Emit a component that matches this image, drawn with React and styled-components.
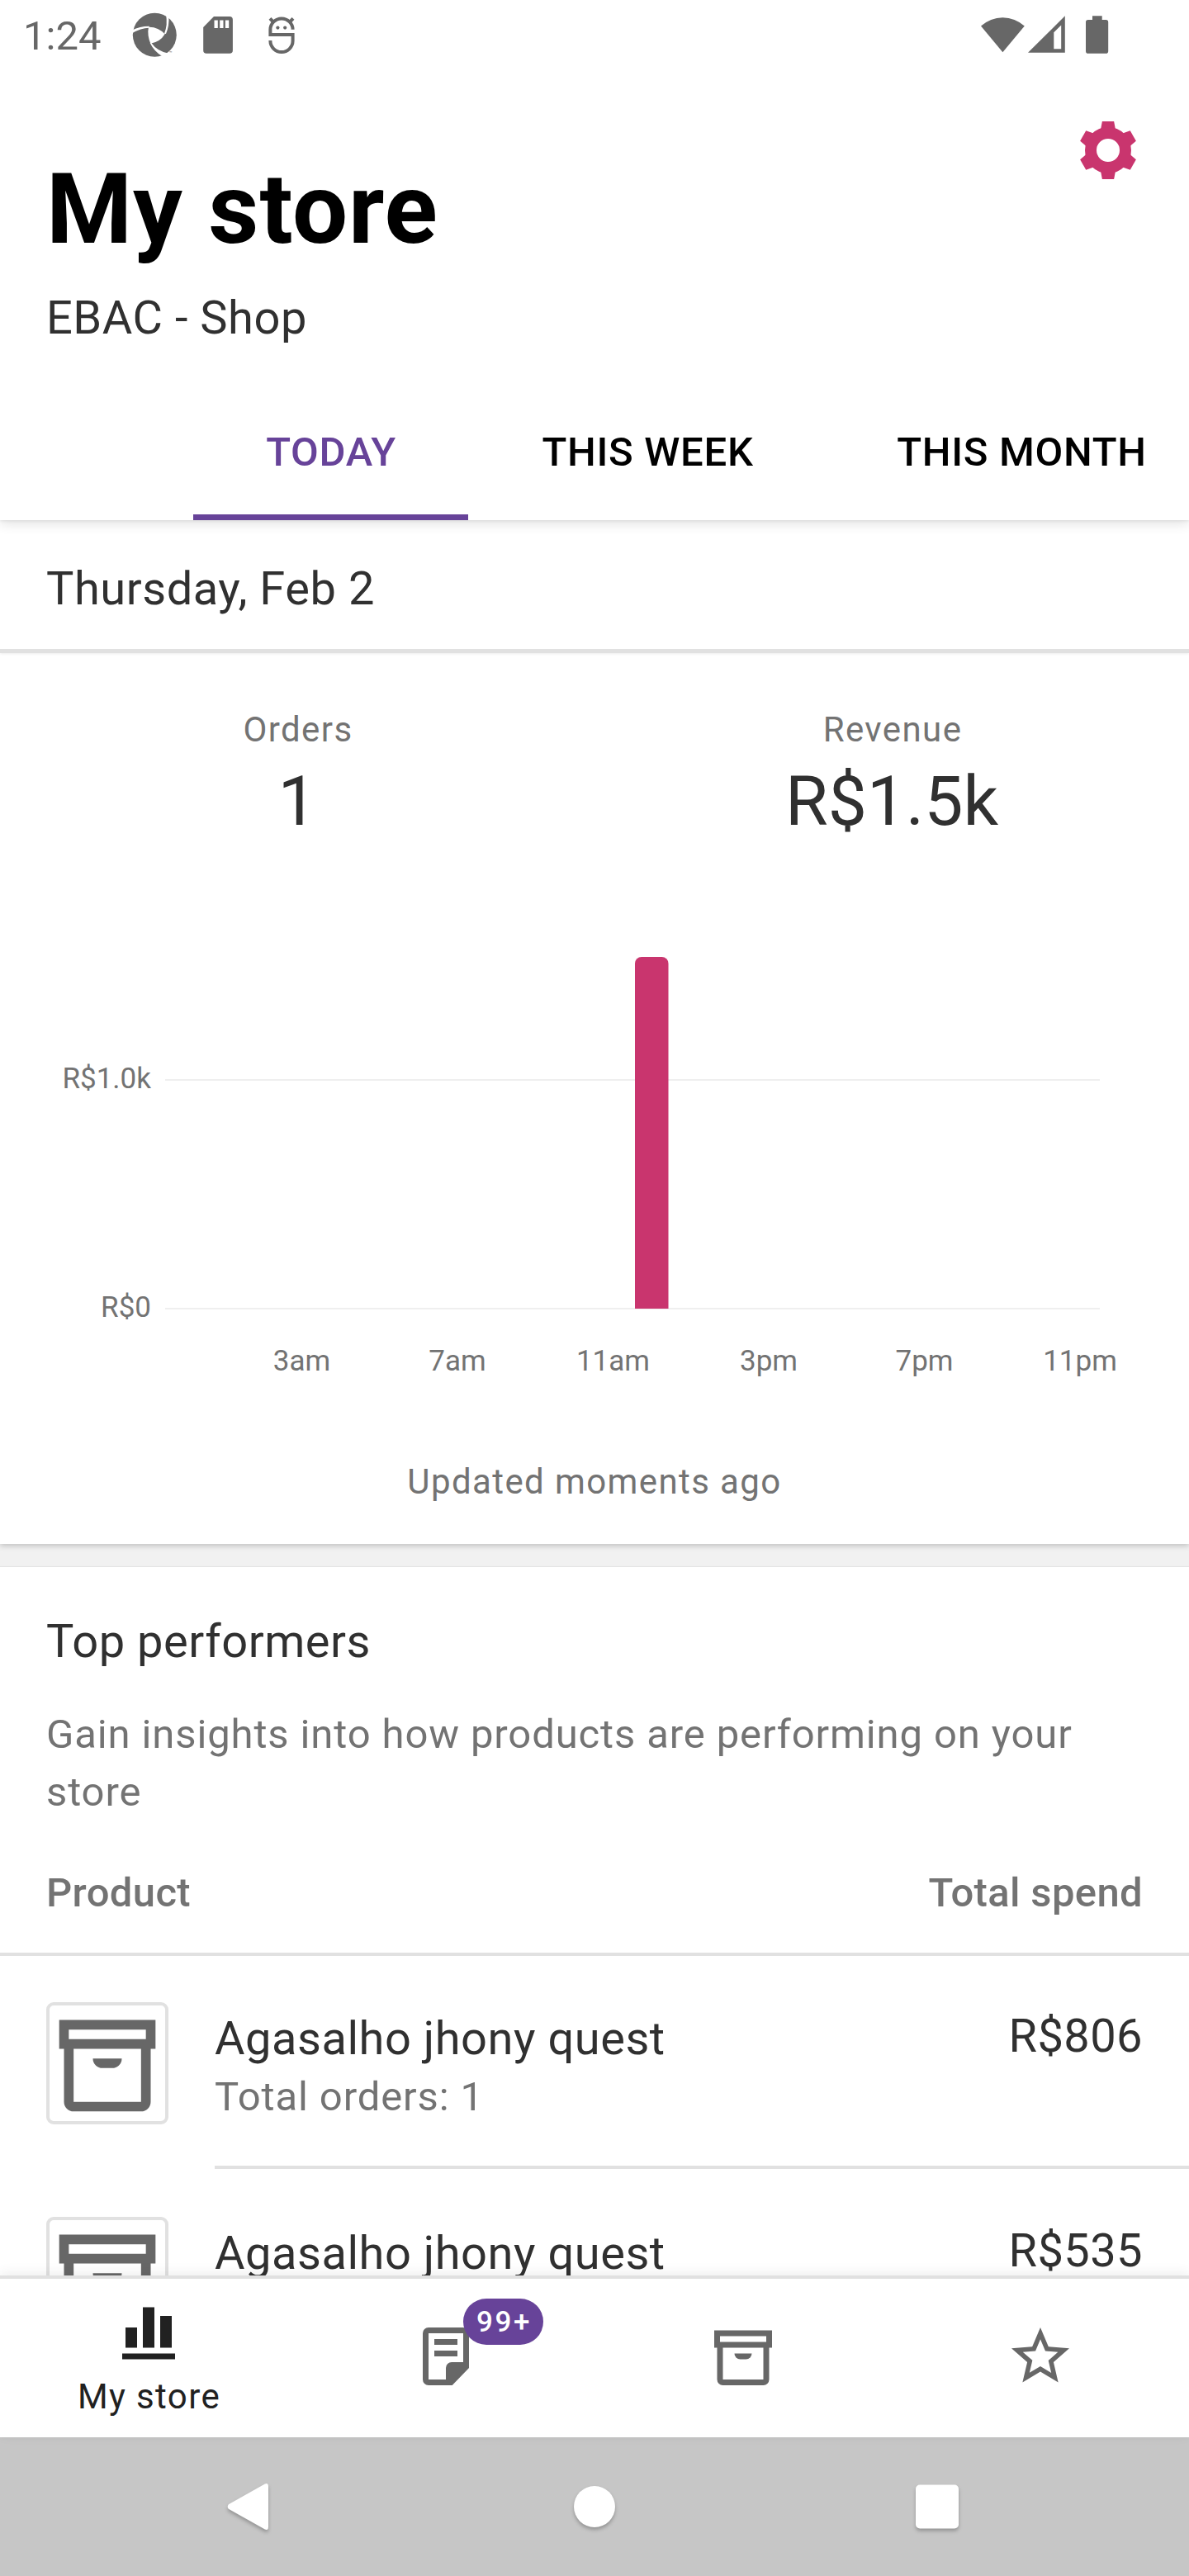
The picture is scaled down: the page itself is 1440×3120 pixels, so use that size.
import React from "react";
import styled, { createGlobalStyle, css } from "styled-components";

const color = {
  ink: "#303030",
  muted: "#737373",
  icon: "#676767",
  line: "#e1e1e1",
  purple: "#674399",
  pink: "#c9356e",
};

const GlobalStyle = createGlobalStyle`
  *, *::before, *::after { box-sizing: border-box; }
  body { margin: 0; background: #fff; }
`;

const Screen = styled.div`
  width: 1440px;
  height: 3120px;
  display: flex;
  flex-direction: column;
  overflow: hidden;
  background: #fff;
  color: ${color.ink};
  font-family: Roboto, "Liberation Sans", sans-serif;
  svg { display: block; flex: none; }
`;

const AppBar = styled.header`
  position: relative;
  z-index: 2;
  height: 630px;
  flex: none;
  display: flex;
  flex-direction: column;
  background: #fff;
  box-shadow: 0 4px 14px rgba(0, 0, 0, 0.12), 0 1px 3px rgba(0, 0, 0, 0.08);
`;

const StatusBar = styled.div`
  height: 84px;
  flex: none;
  display: flex;
  padding: 0 92px 0 28px;
`;

const Clock = styled.span`
  width: 107px;
  padding-top: 4px;
  font-size: 49px;
  line-height: 80px;
  color: ${color.icon};
`;

const Notifications = styled.div`
  flex: 1;
  display: flex;
  padding-left: 25px;
  svg + svg { margin-left: 32px; }
  svg + svg + svg { margin-left: 42px; }
`;

const Heading = styled.div`
  height: 378px;
  flex: none;
  display: flex;
  justify-content: space-between;
  align-items: flex-start;
  padding: 56px 56px 0;
`;

const Titles = styled.div`
  padding-top: 44px;
`;

const Title = styled.h1`
  margin: 0;
  font-size: 119px;
  font-weight: 700;
  line-height: 140px;
  letter-spacing: 0.9px;
  color: #000;
`;

const Subtitle = styled.p`
  margin: 28px 0 0;
  font-size: 56px;
  line-height: 66px;
  letter-spacing: 0.525px;
`;

const Tabs = styled.nav`
  height: 168px;
  display: flex;
  padding-left: 234px;
`;

const Tab = styled.button`
  flex: none;
  width: ${(p) => p.$width}px;
  padding: 11px 0 0 1px;
  border: 0;
  border-bottom: 7px solid ${(p) => (p.$active ? color.purple : "transparent")};
  background: none;
  color: ${(p) => (p.$active ? color.purple : "#000")};
  font: 500 49px/66px Roboto, "Liberation Sans", sans-serif;
  letter-spacing: 0.7px;
  text-align: center;
  white-space: nowrap;
`;

const Content = styled.main`
  flex: 1;
  min-height: 0;
  overflow: hidden;
  background: #f1f1f1;
`;

const DateBar = styled.div`
  position: relative;
  height: 161px;
  margin-bottom: -1px;
  padding: 50px 56px 0;
  border-bottom: 5px solid ${color.line};
  background: #fff;
  font-size: 56px;
  line-height: 66px;
  letter-spacing: 0.525px;
  box-shadow: 0 1px 3px rgba(0, 0, 0, 0.08);
  z-index: 1;
`;

const StatsCard = styled.section`
  height: 1080px;
  padding-top: 66px;
  background: #fff;
  box-shadow: 0 2px 7px rgba(0, 0, 0, 0.22);
`;

const Metrics = styled.div`
  display: grid;
  grid-template-columns: 1fr 1fr;
  text-align: center;
`;

const captionText = css`
  font-size: 42px;
  line-height: 56px;
  letter-spacing: 1.4px;
  color: ${color.muted};
`;

const MetricLabel = styled.div`
  ${captionText}
  padding-left: 2px;
`;

const MetricValue = styled.div`
  margin-top: 10px;
  font-size: 84px;
  line-height: 98px;
`;

const Chart = styled.svg`
  margin-top: 120px;
  text {
    font-family: Roboto, "Liberation Sans", sans-serif;
    font-size: 35px;
    fill: ${color.muted};
  }
`;

const Updated = styled.p`
  ${captionText}
  margin: 67px 0 0;
  text-align: center;
`;

const Performers = styled.section`
  margin-top: 28px;
  padding-top: 57px;
  background: #fff;
  box-shadow: 0 -1px 1px rgba(0, 0, 0, 0.05);
`;

const SectionTitle = styled.h2`
  margin: 0;
  padding: 0 56px;
  font-size: 56px;
  font-weight: 400;
  line-height: 66px;
  letter-spacing: 0.525px;
`;

const Hint = styled.p`
  margin: 45px 0 0;
  padding: 0 56px;
  font-size: 49px;
  line-height: 70px;
  letter-spacing: 0.875px;
  color: ${color.muted};
`;

const Columns = styled.div`
  display: flex;
  justify-content: space-between;
  margin-top: 59px;
  padding: 0 56px 44px;
  border-bottom: 4px solid ${color.line};
  font-size: 49px;
  font-weight: 500;
  line-height: 56px;
  letter-spacing: 0.35px;
  color: ${color.muted};
`;

const Row = styled.article`
  display: flex;
  gap: 56px;
  margin-bottom: 2px;
  padding: 56px 0 0 56px;
`;

const Thumb = styled.div`
  width: 148px;
  height: 148px;
  flex: none;
  border: 4px solid ${color.line};
  border-radius: 9px;
`;

const RowBody = styled.div`
  flex: 1;
  height: 202px;
  display: flex;
  justify-content: space-between;
  padding: 6px 56px 0 0;
  border-bottom: 4px solid ${color.line};
  font-size: 56px;
  line-height: 70px;
`;

const Name = styled.div`
  margin-top: 3px;
  letter-spacing: 0.525px;
`;

const Orders = styled.div`
  margin-top: 8px;
  font-size: 49px;
  line-height: 56px;
  letter-spacing: 0.875px;
  color: ${color.muted};
`;

const Price = styled.div`
  letter-spacing: 0.4px;
`;

const BottomNav = styled.nav`
  position: relative;
  z-index: 2;
  height: 196px;
  flex: none;
  display: grid;
  grid-template-columns: repeat(4, 1fr);
  border-top: 4px solid ${color.line};
  background: #fff;
  box-shadow: 0 -3px 14px rgba(0, 0, 0, 0.07);
`;

const NavItem = styled.div`
  display: flex;
  flex-direction: column;
  align-items: center;
  padding-top: ${(p) => (p.$active ? 22 : 52)}px;
  color: ${(p) => (p.$active ? "#212121" : color.icon)};
`;

const NavLabel = styled.span`
  margin-top: 9px;
  padding-left: 1px;
  font-size: 42px;
  line-height: 56px;
  letter-spacing: 1.4px;
`;

const IconHolder = styled.div`
  position: relative;
`;

const Badge = styled.span`
  position: absolute;
  left: 63px;
  top: -28px;
  width: 97px;
  height: 56px;
  border-radius: 28px;
  background: ${color.purple};
  color: #fff;
  font-size: 35px;
  font-weight: 500;
  line-height: 57px;
  letter-spacing: 2.6px;
  text-indent: 2px;
  text-align: center;
`;

const SystemBar = styled.div`
  height: 168px;
  flex: none;
  display: flex;
  justify-content: space-between;
  align-items: center;
  padding: 0 265px;
  background: #c6c6c6;
  svg { filter: drop-shadow(0 3px 2px rgba(0, 0, 0, 0.25)); }
`;

const ApertureIcon = () => (
  <svg width="54" height="84" viewBox="160 0 54 84">
    <circle cx="187.3" cy="42.3" r="26.5" fill={color.icon} />
    <g transform="translate(20 5) scale(.3333)" fill="#fff">
      <path d="M480 83Q515 82 539 109Q522 138 487 143Q474 112 480 83Z" />
      <path d="M418 96Q446 80 482 80L482 86Q450 87 418 107Z" />
      <path d="M543 36Q550 76 537 107L543 108Q556 78 553 42Z" />
      <path d="M485 141Q500 172 530 190L558 184L553 179Q512 172 490 141Z" />
    </g>
    <text x="205" y="66" fontSize="6" fill={color.icon}>™</text>
  </svg>
);

const SdCardIcon = () => (
  <svg width="36" height="84" viewBox="246.5 0 36 84">
    <path
      fill={color.icon}
      fillRule="evenodd"
      d="M259.5 20H278.6A3.8 3.8 0 0 1 282.4 23.8V61A3.8 3.8 0 0 1 278.6 64.8H250.5A3.8 3.8 0 0 1 246.7 61V33ZM260 24.5V34H264.3V24.5ZM266.7 24.5V34H271V24.5ZM273.4 24.5V34H277.7V24.5Z"
    />
  </svg>
);

const CreatureIcon = () => (
  <svg width="34" height="84" viewBox="324.6 0 34 84">
    <g fill="none" stroke={color.icon} strokeWidth="4">
      <path d="M355.2 35.8A13.6 13.4 0 0 0 328 35.8V42H355.2V49.6A13.6 13.4 0 0 1 328 49.6V49" />
      <path d="M327.6 22.4L332 27M355.6 22.4L351.2 27" />
    </g>
    <circle cx="337" cy="33.6" r="2.1" fill={color.icon} />
    <circle cx="345.8" cy="33.6" r="2.1" fill={color.icon} />
  </svg>
);

const SignalIcons = () => (
  <svg width="160" height="84" viewBox="1188 0 160 84">
    <g fill={color.icon}>
      <path d="M1214.4 63.2L1188 31.6A39 39 0 0 1 1240.8 31.6Z" />
      <path
        fillRule="evenodd"
        d="M1245 63.8L1289.8 19.3V63.8ZM1276.3 39.3V59.2H1285.2V30.4Z"
      />
      <path d="M1323 24V19.3H1334.7V24H1339.4A2.8 2.8 0 0 1 1342.2 26.8V61.9A2.8 2.8 0 0 1 1339.4 64.7H1317.8A2.8 2.8 0 0 1 1315 61.9V26.8A2.8 2.8 0 0 1 1317.8 24Z" />
    </g>
  </svg>
);

const TOOTH_ANGLES = [0, 60, 120, 180, 240, 300];

const GearIcon = () => (
  <svg width="84" height="84" viewBox="-42 -42 84 84" fill={color.pink}>
    {TOOTH_ANGLES.map((a) => (
      <path key={a} d="M-9.2 -24L-7.1 -35H7.1L9.2 -24Z" transform={`rotate(${a})`} />
    ))}
    <circle r="21" fill="none" stroke={color.pink} strokeWidth="14" />
  </svg>
);

const BoxIcon = ({ size }) => (
  <svg width={size} height={size} viewBox="0 0 24 24" fill={color.icon}>
    <path
      fillRule="evenodd"
      d="M2 3H22V9H21V20A2 2 0 0 1 19 22H5A2 2 0 0 1 3 20V9H2ZM4 5V7H20V5ZM5 9V20H19V9Z"
    />
    <path d="M9 11H15A2 2 0 0 1 13 13H11A2 2 0 0 1 9 11Z" />
  </svg>
);

const BarsIcon = () => (
  <svg width="84" height="84" viewBox="138 2782 84 84" fill="#212121">
    <path d="M152 2819H166V2843.6H152ZM173 2794.4H187V2843.6H173ZM194 2805H208V2843.6H194ZM148 2850.4H212V2857.6H148Z" />
  </svg>
);

const NoteIcon = () => (
  <svg width="84" height="84" viewBox="0 0 24 24" fill={color.icon}>
    <path
      fillRule="evenodd"
      d="M6 2H18A2 2 0 0 1 20 4V16L14.2 22H6A2 2 0 0 1 4 20V4A2 2 0 0 1 6 2ZM6 4V20H12V16A2 2 0 0 1 14 14H18V4Z"
    />
    <path d="M8 6H16V8H8ZM8 10H16V12H8Z" />
  </svg>
);

const StarIcon = () => (
  <svg width="84" height="84" viewBox="0 0 24 24" fill={color.icon}>
    <path d="M22 9.24l-7.19-.62L12 2 9.19 8.63 2 9.24l5.46 4.73L5.82 21 12 17.27 18.18 21l-1.63-7.03L22 9.24zM12 15.4l-3.76 2.27 1-4.28-3.32-2.88 4.38-.38L12 6.1l1.71 4.04 4.38.38-3.32 2.88 1 4.28L12 15.4z" />
  </svg>
);

const TABS = [
  { label: "TODAY", width: 333, active: true },
  { label: "THIS WEEK", width: 434 },
  { label: "THIS MONTH", width: 472 },
];

const HOURS = ["3am", "7am", "11am", "3pm", "7pm", "11pm"];

const PRODUCTS = [
  { name: "Agasalho jhony quest", orders: 1, spend: "R$806" },
  { name: "Agasalho jhony quest", spend: "R$535" },
];

const RevenueChart = () => (
  <Chart width="1440" height="560" viewBox="0 1140 1440 560">
    <path d="M200 1308H1332M200 1585H1332" stroke="#efefef" strokeWidth="2" />
    <path d="M769 1585V1167A8 8 0 0 1 777 1159H801.5A8 8 0 0 1 809.5 1167V1585Z" fill={color.pink} />
    <text x="183" y="1318" textAnchor="end">R$1.0k</text>
    <text x="183" y="1595" textAnchor="end">R$0</text>
    {HOURS.map((hour, i) => (
      <text key={hour} x={365.5 + i * 188.5} y="1660" textAnchor="middle">
        {hour}
      </text>
    ))}
  </Chart>
);

export default function App() {
  return (
    <Screen>
      <GlobalStyle />
      <AppBar>
        <StatusBar>
          <Clock>1:24</Clock>
          <Notifications>
            <ApertureIcon />
            <SdCardIcon />
            <CreatureIcon />
          </Notifications>
          <SignalIcons />
        </StatusBar>
        <Heading>
          <Titles>
            <Title>My store</Title>
            <Subtitle>EBAC - Shop</Subtitle>
          </Titles>
          <GearIcon />
        </Heading>
        <Tabs>
          {TABS.map((t) => (
            <Tab key={t.label} $width={t.width} $active={t.active}>
              {t.label}
            </Tab>
          ))}
        </Tabs>
      </AppBar>
      <Content>
        <DateBar>Thursday, Feb 2</DateBar>
        <StatsCard>
          <Metrics>
            <div>
              <MetricLabel>Orders</MetricLabel>
              <MetricValue>1</MetricValue>
            </div>
            <div>
              <MetricLabel>Revenue</MetricLabel>
              <MetricValue>R$1.5k</MetricValue>
            </div>
          </Metrics>
          <RevenueChart />
          <Updated>Updated moments ago</Updated>
        </StatsCard>
        <Performers>
          <SectionTitle>Top performers</SectionTitle>
          <Hint>Gain insights into how products are performing on your store</Hint>
          <Columns>
            <span>Product</span>
            <span>Total spend</span>
          </Columns>
          {PRODUCTS.map((p) => (
            <Row key={p.spend}>
              <Thumb>
                <BoxIcon size={140} />
              </Thumb>
              <RowBody>
                <div>
                  <Name>{p.name}</Name>
                  {p.orders && <Orders>Total orders: {p.orders}</Orders>}
                </div>
                <Price>{p.spend}</Price>
              </RowBody>
            </Row>
          ))}
        </Performers>
      </Content>
      <BottomNav>
        <NavItem $active>
          <BarsIcon />
          <NavLabel>My store</NavLabel>
        </NavItem>
        <NavItem>
          <IconHolder>
            <NoteIcon />
            <Badge>99+</Badge>
          </IconHolder>
        </NavItem>
        <NavItem>
          <BoxIcon size={84} />
        </NavItem>
        <NavItem>
          <StarIcon />
        </NavItem>
      </BottomNav>
      <SystemBar>
        <svg width="70" height="84" viewBox="265 2994 70 84" fill="#fff">
          <path d="M276.8 3033.2L320.8 3008.4Q325 3006.8 325 3011.5V3060.5Q325 3065.2 320.8 3063.6L276.8 3038.8Q274.6 3036 276.8 3033.2Z" />
        </svg>
        <svg width="70" height="84" viewBox="685 2994 70 84" fill="#fff">
          <circle cx="720" cy="3036" r="25" />
        </svg>
        <svg width="70" height="84" viewBox="1105 2994 70 84" fill="#fff">
          <rect x="1109" y="3009.5" width="52" height="53" rx="5" />
        </svg>
      </SystemBar>
    </Screen>
  );
}
